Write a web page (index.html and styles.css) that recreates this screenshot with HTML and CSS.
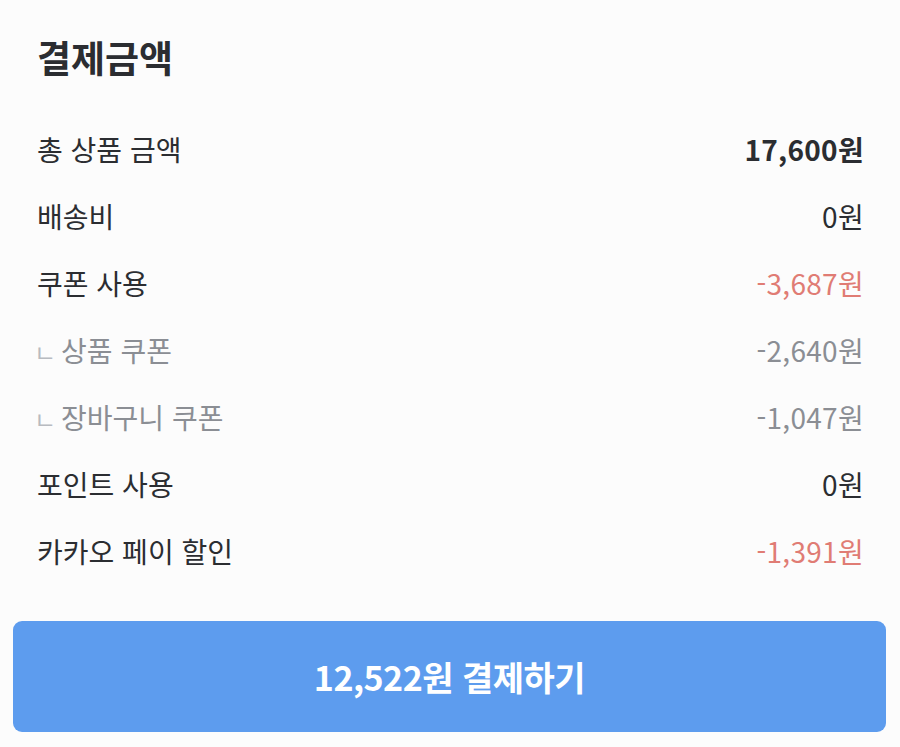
FILE: index.html
```html
<!DOCTYPE html>
<html lang="ko">
<head>
<meta charset="utf-8">
<link rel="stylesheet" href="styles.css">
</head>
<body>
<div class="page">
  <h1 class="title">결제금액</h1>
  <ul class="rows">
    <li class="row"><span class="label">총 상품 금액</span><span class="value strong">17,600원</span></li>
    <li class="row"><span class="label">배송비</span><span class="value">0원</span></li>
    <li class="row"><span class="label">쿠폰 사용</span><span class="value red">-3,687원</span></li>
    <li class="row sub"><span class="label"><span class="branch">ㄴ</span>상품 쿠폰</span><span class="value">-2,640원</span></li>
    <li class="row sub"><span class="label"><span class="branch">ㄴ</span>장바구니 쿠폰</span><span class="value">-1,047원</span></li>
    <li class="row"><span class="label">포인트 사용</span><span class="value">0원</span></li>
    <li class="row"><span class="label">카카오 페이 할인</span><span class="value red">-1,391원</span></li>
  </ul>
  <button class="pay">12,522원 결제하기</button>
</div>
</body>
</html>
```
FILE: styles.css
```css
html, body {
  margin: 0;
  padding: 0;
  background: #fcfcfc;
}
body {
  font-family: "Noto Sans CJK KR", "Noto Sans", sans-serif;
  color: #2b2d31;
}
.page {
  width: 900px;
  height: 747px;
  box-sizing: border-box;
  padding: 29px 14px 0 13px;
  display: flex;
  flex-direction: column;
}
.title {
  margin: 0 0 0 24px;
  font-size: 37px;
  font-weight: 700;
  line-height: 56px;
  letter-spacing: 0;
}
.rows {
  list-style: none;
  margin: 30px 0 0 0;
  padding: 0 22px 0 24px;
}
.row {
  display: flex;
  justify-content: space-between;
  align-items: center;
  height: 67px;
  font-size: 28px;
  letter-spacing: 0;
}
.value {
  letter-spacing: 0.3px;
}
.value.strong {
  font-weight: 700;
}
.value.red {
  color: #e07c74;
}
.row.sub {
  color: #8b8e94;
}
.branch {
  display: inline-block;
  font-size: 24px;
  color: #b8bbc0;
  margin-left: -3px;
  margin-right: 5px;
}
.pay {
  margin-top: 37px;
  height: 111px;
  border: none;
  border-radius: 9px;
  background: #5d9cee;
  color: #fff;
  font-family: inherit;
  font-size: 34px;
  font-weight: 700;
  letter-spacing: -0.5px;
}
```
